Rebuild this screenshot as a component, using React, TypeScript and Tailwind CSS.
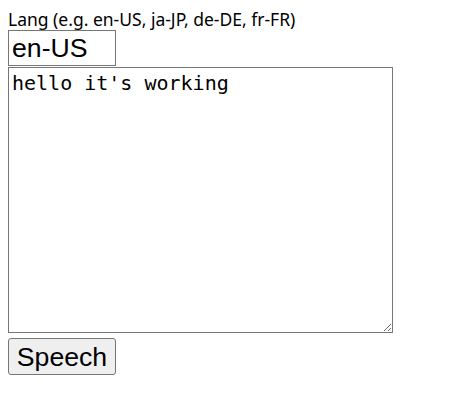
import React, { useState } from 'react';

const App: React.FC = () => {
    const [lang, setLang] = useState<string>('en-US');
    const [text, setText] = useState<string>("hello it's working");

    return (
        <div className="min-h-[400px] bg-white p-2 text-black">
            {/* Lang field */}
            <label className="block h-[22px] whitespace-nowrap font-['Noto_Sans',sans-serif] text-[17.5px] leading-[22px] text-black">
                Lang (e.g. en-US, ja-JP, de-DE, fr-FR)
            </label>
            <input
                value={lang}
                onChange={e => setLang(e.target.value)}
                className="block h-[36px] w-[108px] border border-[#767676] px-[3px] font-['Liberation_Sans',Arial,sans-serif] text-[26.67px] leading-[30px] text-black outline-none"
            />

            {/* Text to speak */}
            <textarea
                value={text}
                onChange={e => setText(e.target.value)}
                className="mt-px block h-[266px] w-[385px] resize border border-[#767676] px-[3px] py-[3px] font-['DejaVu_Sans_Mono',monospace] text-[20px] leading-[24px] text-black outline-none"
            />

            <button className="mt-[5px] block h-[37px] w-[108px] rounded-[3px] border border-[#767676] bg-[#efefef] font-['Liberation_Sans',Arial,sans-serif] text-[26.67px] leading-[30px] text-black">
                Speech
            </button>
        </div>
    );
};

export default App;
